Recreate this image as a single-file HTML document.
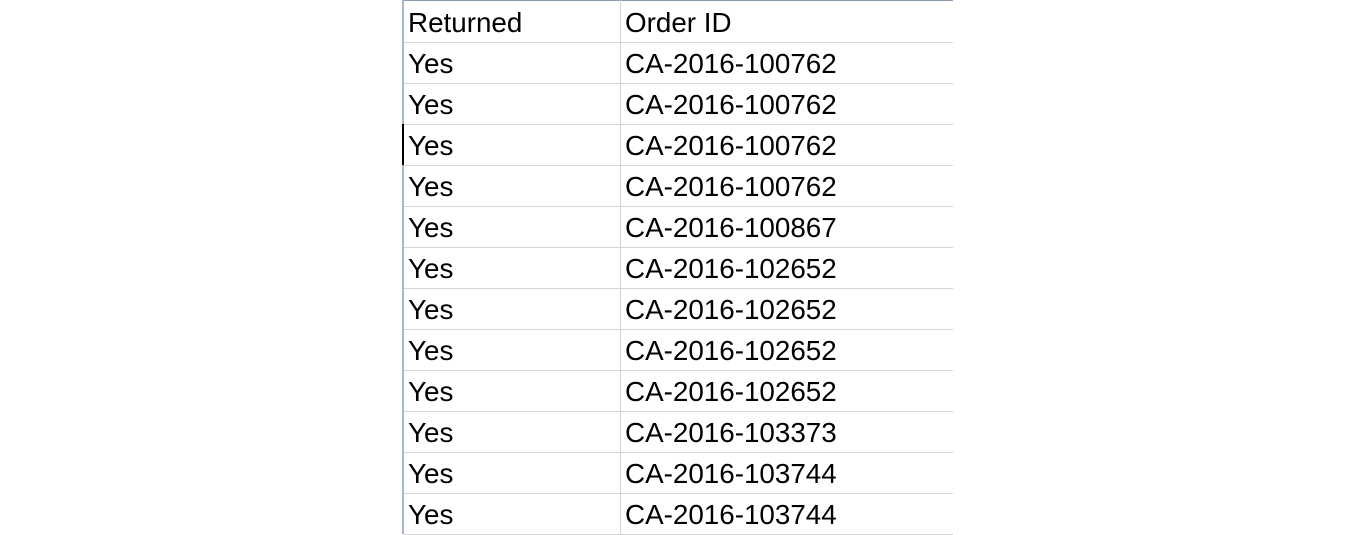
<!DOCTYPE html>
<html><head><style>
body{margin:0;width:1357px;height:534px;background:#fff;position:relative;overflow:hidden;font-family:"Liberation Sans",sans-serif;}
.top{position:absolute;left:402px;top:0;width:551px;height:1px;background:#8a9bb0;}
.left{position:absolute;left:402px;top:0;width:2px;height:534px;background:#a9b8cc;}
.col{position:absolute;left:620px;top:0;width:1px;height:534px;background:#d4d4d4;}
.row{position:absolute;left:404px;width:549px;height:1px;background:#d4d4d4;}
.t{position:absolute;font-size:27.8px;color:#000;line-height:30px;}
.mark{position:absolute;left:402px;top:124px;width:2px;height:41px;background:#000;}
</style></head><body>
<div class="top"></div><div class="left"></div><div class="col"></div><div class="mark"></div>
<div id="rows"></div>
<script>
var ids=["Order ID","CA-2016-100762","CA-2016-100762","CA-2016-100762","CA-2016-100762","CA-2016-100867","CA-2016-102652","CA-2016-102652","CA-2016-102652","CA-2016-102652","CA-2016-103373","CA-2016-103744","CA-2016-103744"];
var h="";
for(var i=0;i<13;i++){
 var y=i*41;
 h+='<div class="t" style="left:408px;top:'+(y+8)+'px">'+(i==0?"Returned":"Yes")+'</div>';
 h+='<div class="t" style="left:625px;top:'+(y+8)+'px">'+ids[i]+'</div>';
 h+='<div class="row" style="top:'+(y+42)+'px"></div>';
}
document.getElementById("rows").innerHTML=h;
</script>
</body></html>
